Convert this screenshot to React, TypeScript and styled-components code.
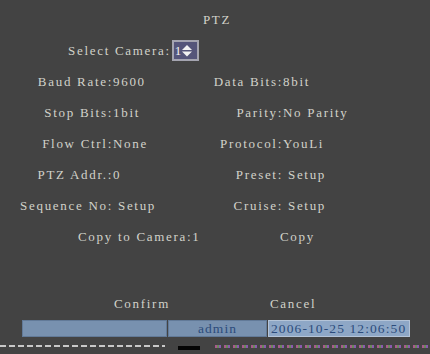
import React from 'react';
import styled, { createGlobalStyle } from 'styled-components';

const GlobalStyle = createGlobalStyle`
  html, body {
    margin: 0;
    padding: 0;
    background: #434343;
  }
`;

const Screen = styled.div`
  width: 430px;
  height: 354px;
  overflow: hidden;
  background: #434343;
  font-family: 'Liberation Serif', 'DejaVu Serif', serif;
  font-size: 13px;
  letter-spacing: 1.7px;
  color: #d2d2ca;
  padding-top: 4px;
  box-sizing: border-box;
  display: flex;
  flex-direction: column;
`;

const Title = styled.div`
  height: 31px;
  line-height: 31px;
  text-align: center;
  padding-left: 4px;
`;

const Row = styled.div<{ indent: number }>`
  height: 31px;
  display: flex;
  align-items: center;
  padding-left: ${({ indent }) => indent}px;
  white-space: pre;
`;

const Cell = styled.span<{ width: number }>`
  width: ${({ width }) => width}px;
  flex-shrink: 0;
`;

const Spinner = styled.div`
  margin-left: 1px;
  width: 22px;
  height: 17px;
  border: 2px solid #a4a4b0;
  background: #55557a;
  display: flex;
  align-items: center;
  gap: 1px;
  padding-left: 1px;
  color: #f2f2f2;
  letter-spacing: 0;
`;

const Fields = styled.div`
  display: grid;
  grid-template-columns: 113px 90px 80px 1fr;
  grid-auto-rows: 31px;
  align-items: center;
  white-space: pre;
`;

const Label = styled.span`
  text-align: right;
`;

const Spacer = styled.div`
  height: 36px;
`;

const StatusBar = styled.div`
  display: flex;
  margin-left: 22px;
  height: 17px;
  margin-top: 1px;
`;

const Segment = styled.div<{ width: number; light?: boolean }>`
  width: ${({ width }) => width}px;
  box-sizing: border-box;
  background: ${({ light }) => (light ? '#8ea7c6' : '#7891af')};
  border: 1px solid ${({ light }) => (light ? '#b4c4d8' : '#627a98')};
  margin-right: 1px;
  color: #2c4c7c;
  line-height: 15px;
  font-size: 13.5px;
  letter-spacing: 1.1px;
  text-align: ${({ light }) => (light ? 'left' : 'center')};
  padding-left: ${({ light }) => (light ? '2px' : '0')};
  white-space: pre;
  overflow: hidden;
`;

const Strip = styled.div`
  display: flex;
  align-items: flex-end;
  height: 7px;
  margin-top: 6px;
`;

const Dashes = styled.div`
  width: 165px;
  height: 2px;
  margin-bottom: 3px;
  background: repeating-linear-gradient(90deg, #c8c8c8 0 6px, transparent 6px 9px);
`;

const BlackBlock = styled.div`
  width: 22px;
  height: 4px;
  margin-left: 13px;
  background: #050505;
`;

const Noise = styled.div`
  margin-left: 15px;
  width: 215px;
  height: 3px;
  margin-bottom: 2px;
  background: repeating-linear-gradient(
    90deg,
    #a85a8c 0 2px,
    #6a8a5a 2px 4px,
    #8a5ab0 4px 6px,
    #434343 6px 9px
  );
`;

const Arrows = () => (
  <svg width="10" height="13" viewBox="0 0 10 13">
    <polygon points="0,6 5,1 10,6" fill="#f2f2f2" />
    <polygon points="0,7.5 5,12.5 10,7.5" fill="#f2f2f2" />
  </svg>
);

const fields: [string, string, string, string][] = [
  ['Baud Rate:', '9600', 'Data Bits:', '8bit'],
  ['Stop Bits:', '1bit', 'Parity:', 'No Parity'],
  ['Flow Ctrl:', 'None', 'Protocol:', 'YouLi'],
  ['PTZ Addr.:', '0', 'Preset:', ' Setup'],
  ['Sequence No:', ' Setup', 'Cruise:', ' Setup'],
];

export default function App() {
  return (
    <>
      <GlobalStyle />
      <Screen>
        <Title>PTZ</Title>
        <Row indent={68}>
          <span>Select Camera:</span>
          <Spinner>
            <span>1</span>
            <Arrows />
          </Spinner>
        </Row>
        <Fields>
          {fields.map(([l1, v1, l2, v2]) => (
            <React.Fragment key={l1}>
              <Label>{l1}</Label>
              <span>{v1}</span>
              <Label>{l2}</Label>
              <span>{v2}</span>
            </React.Fragment>
          ))}
        </Fields>
        <Row indent={78}>
          <Cell width={202}>Copy to Camera:1</Cell>
          <span>Copy</span>
        </Row>
        <Spacer />
        <Row indent={114}>
          <Cell width={156}>Confirm</Cell>
          <span>Cancel</span>
        </Row>
        <StatusBar>
          <Segment width={145}> </Segment>
          <Segment width={99}>admin</Segment>
          <Segment width={142} light>2006-10-25 12:06:50</Segment>
        </StatusBar>
        <Strip>
          <Dashes />
          <BlackBlock />
          <Noise />
        </Strip>
      </Screen>
    </>
  );
}
